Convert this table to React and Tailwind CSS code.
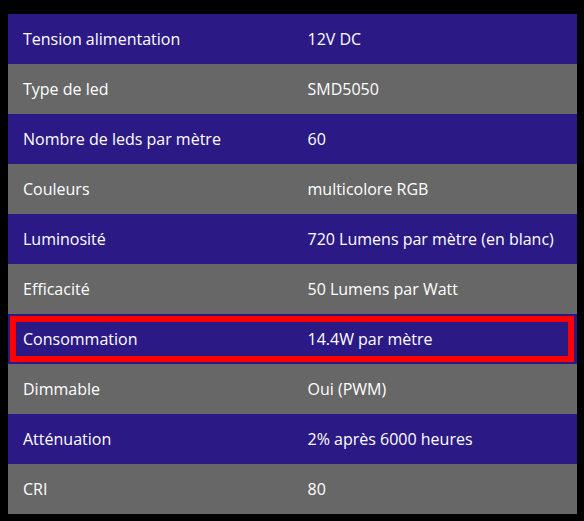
import React from 'react';

const specs = [
    ['Tension alimentation', '12V DC'],
    ['Type de led', 'SMD5050'],
    ['Nombre de leds par mètre', '60'],
    ['Couleurs', 'multicolore RGB'],
    ['Luminosité', '720 Lumens par mètre (en blanc)'],
    ['Efficacité', '50 Lumens par Watt'],
    ['Consommation', '14.4W par mètre'],
    ['Dimmable', 'Oui (PWM)'],
    ['Atténuation', '2% après 6000 heures'],
    ['CRI', '80'],
];

export default function App() {
    return (
        <div className="w-[584px] h-[521px] bg-black pt-[14px] pl-[8px] font-['Open_Sans',sans-serif]">
            <div className="w-[569px] flex flex-col">
                {specs.map(([label, value], i) => (
                    <div
                        key={label}
                        className={`relative h-[50px] grid grid-cols-2 items-center text-white text-[16px] ${
                            i % 2 === 0 ? 'bg-[#2b1a86]' : 'bg-[#676767]'
                        }`}
                    >
                        <span className="pl-[15px]">{label}</span>
                        <span className="pl-[15px]">{value}</span>
                        {label === 'Consommation' && (
                            <div className="absolute left-[2px] top-[2px] right-[3px] bottom-[2px] border-[6px] border-[#ff0000]" />
                        )}
                    </div>
                ))}
            </div>
        </div>
    );
}
